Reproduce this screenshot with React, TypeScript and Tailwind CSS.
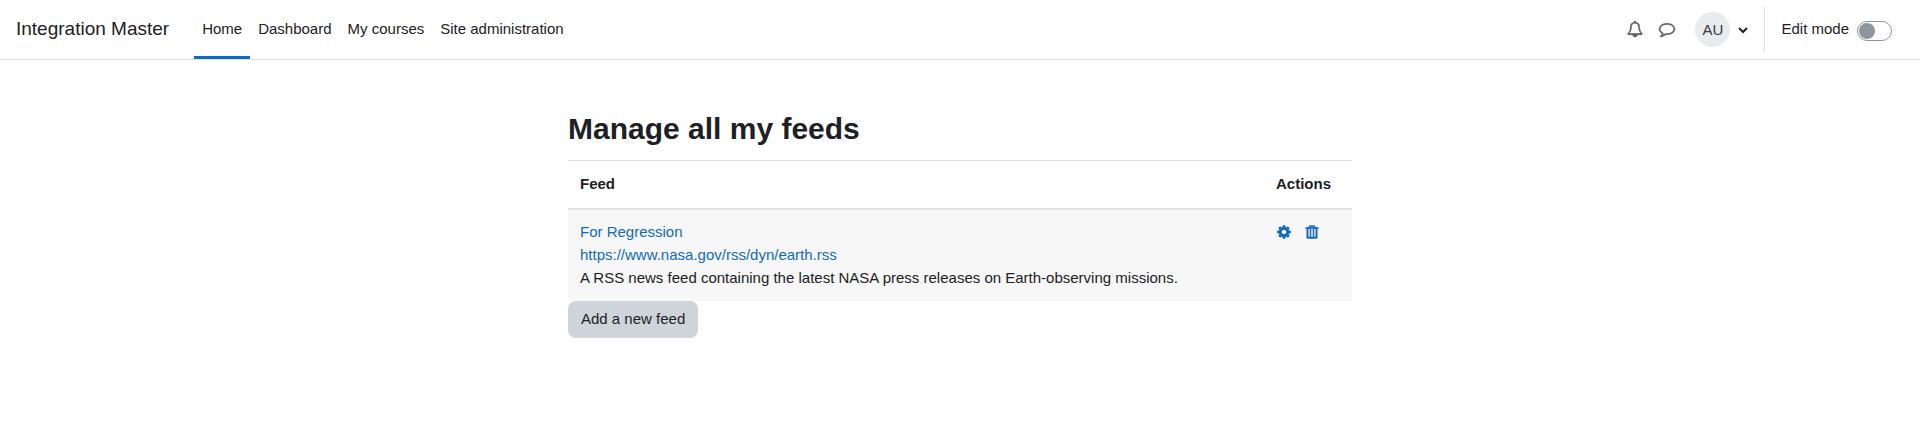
import { useState } from "react";

const ICONS = {
  bell: "M912 1696q0-16-16-16-59 0-101.5-42.5t-42.5-101.5q0-16-16-16t-16 16q0 73 51.5 124.5t124.5 51.5q16 0 16-16zm-666-288h1300q-266-300-266-832 0-51-24-105t-69-103-121.5-80.5-169.5-31.5-169.5 31.5-121.5 80.5-69 103-24 105q0 532-266 832zm1482 0q0 52-38 90t-90 38h-448q0 106-75 181t-181 75-181-75-75-181h-448q-52 0-90-38t-38-90q50-42 91-88t85-119.5 74.5-158.5 50-206 19.5-260q0-152 117-282.5t307-158.5q-8-19-8-39 0-40 28-68t68-28 68 28 28 68q0 20-8 39 190 28 307 158.5t117 282.5q0 139 19.5 260t50 206 74.5 158.5 85 119.5 91 88z",
  comment:
    "M896 384q-204 0-381.5 69.5t-282 187.5-104.5 255q0 112 71.5 213.5t201.5 175.5l87 50-27 96q-24 91-70 172 152-63 275-171l43-38 57 6q69 8 130 8 204 0 381.5-69.5t282-187.5 104.5-255-104.5-255-282-187.5-381.5-69.5zm896 512q0 174-120 321.5t-326 233-450 85.5q-70 0-145-8-198 175-460 242-49 14-114 22h-5q-15 0-27-10.5t-16-27.5v-1q-3-4-.5-12t2-10 4.5-9.5l6-9 7-8.5 8-9q7-8 31-34.5t34.5-38 31-39.5 32.5-51 27-59 26-76q-157-89-247.5-220t-90.5-281q0-174 120-321.5t326-233 450-85.5 450 85.5 326 233 120 321.5z",
  cog: "M1152 896q0-106-75-181t-181-75-181 75-75 181 75 181 181 75 181-75 75-181zm512-109v222q0 12-8 23t-20 13l-185 28q-19 54-39 91 35 50 107 138 10 12 10 25t-9 23q-27 37-99 108t-94 71q-12 0-26-9l-138-108q-44 23-91 38-16 136-29 186-7 28-36 28h-222q-14 0-24.5-8.5t-11.5-21.5l-28-184q-49-16-90-37l-141 107q-10 9-25 9-14 0-25-11-126-114-165-168-7-10-7-23 0-12 8-23 15-21 51-66.5t54-70.5q-27-50-41-99l-183-27q-13-2-21-12.5t-8-23.5v-222q0-12 8-23t19-13l186-28q14-46 39-92-40-57-107-138-10-12-10-24 0-10 9-23 26-36 98.5-107.5t94.5-71.5q13 0 26 10l138 107q44-23 91-38 16-136 29-186 7-28 36-28h222q14 0 24.5 8.5t11.5 21.5l28 184q49 16 90 37l142-107q9-9 24-9 13 0 25 10 129 119 165 170 7 8 7 22 0 12-8 23-15 21-51 66.5t-54 70.5q26 50 41 98l183 28q13 2 21 12.5t8 23.5z",
};

function Icon({ name, weight = 0 }: { name: keyof typeof ICONS; weight?: number }) {
  return (
    <svg
      viewBox="0 0 1792 1792"
      className="size-4 overflow-visible fill-current stroke-current"
      strokeWidth={weight}
      aria-hidden="true"
    >
      <path d={ICONS[name]} />
    </svg>
  );
}

function TrashIcon() {
  return (
    <svg viewBox="0 0 16 16" className="size-4" fill="none" stroke="currentColor" aria-hidden="true">
      <path d="M5 3.5 6 2h4l1 1.5" strokeWidth="1.4" />
      <path d="M1.5 4h13" strokeWidth="1.8" />
      <path d="M3.5 4.5v9.3h9V4.5" strokeWidth="2" strokeLinejoin="round" />
      <path d="M6.5 5v8M9.5 5v8" strokeWidth="1.5" />
    </svg>
  );
}

const navItems = ["Home", "Dashboard", "My courses", "Site administration"];

const feeds = [
  {
    title: "For Regression",
    url: "https://www.nasa.gov/rss/dyn/earth.rss",
    description:
      "A RSS news feed containing the latest NASA press releases on Earth-observing missions.",
  },
];

function Navbar() {
  const [editing, setEditing] = useState(false);

  return (
    <header className="flex h-[60px] items-stretch border-b border-[#dee2e6] pr-7 pl-4">
      <a href="#" className="mr-[25px] flex items-center pb-0.5 text-[19px]">
        Integration Master
      </a>
      <nav className="flex">
        {navItems.map((item, i) => (
          <a
            key={item}
            href="#"
            aria-current={i === 0 ? "page" : undefined}
            className="flex items-center border-b-3 border-transparent px-2 pt-px aria-[current=page]:border-[#0f6cbf]"
          >
            {item}
          </a>
        ))}
      </nav>

      <div className="ml-auto flex items-center">
        <div className="flex gap-4 pb-0.5 text-[#5a5f64]">
          <button type="button" aria-label="Notifications">
            <Icon name="bell" weight={70} />
          </button>
          <button type="button" aria-label="Messages">
            <Icon name="comment" weight={60} />
          </button>
        </div>
        <button type="button" aria-label="User menu" className="ml-5 flex items-center gap-2">
          <span className="flex size-[35px] items-center justify-center rounded-full bg-[#e9ecef] pb-px text-[#343a40]">
            AU
          </span>
          <svg viewBox="0 0 10 8" className="h-2 w-2.5" aria-hidden="true">
            <path d="M1 2 5 6 9 2" fill="none" stroke="currentColor" strokeWidth="2" />
          </svg>
        </button>
        <div className="ml-4 h-[45px] border-l border-[#dee2e6]" />
        <label htmlFor="edit-mode" className="ml-4 pb-0.5">
          Edit mode
        </label>
        <input
          id="edit-mode"
          type="checkbox"
          role="switch"
          checked={editing}
          onChange={(e) => setEditing(e.target.checked)}
          className="mt-0.5 ml-2 flex h-5 w-[35px] appearance-none items-center rounded-full border border-[#8f959e] px-px before:size-4 before:rounded-full before:bg-[#8f959e] checked:justify-end checked:bg-[#0f6cbf] checked:before:bg-white"
        />
      </div>
    </header>
  );
}

export default function App() {
  return (
    <div className="bg-white font-['Liberation_Sans',Arial,sans-serif] text-[15px] leading-[23px] text-[#1d2125]">
      <Navbar />
      <main className="mx-auto max-w-[784px] py-[51px]">
        <h1 className="mb-[13px] text-3xl leading-9 font-bold">Manage all my feeds</h1>

        <table className="w-full border-collapse text-left">
          <thead>
            <tr className="border-t border-b-2 border-[#dee2e6]">
              <th className="px-3 pt-[11px] pb-[13px]">Feed</th>
              <th className="w-[88px] px-3 pt-[11px] pb-[13px]">Actions</th>
            </tr>
          </thead>
          <tbody>
            {feeds.map((feed) => (
              <tr key={feed.url} className="bg-[#f7f7f7] align-top">
                <td className="px-3 pt-2.5 pb-3">
                  <a href="#" className="block text-[#0f6cbf]">
                    {feed.title}
                  </a>
                  <a href={feed.url} className="block text-[#0f6cbf]">
                    {feed.url}
                  </a>
                  <p>{feed.description}</p>
                </td>
                <td className="px-3 pt-2.5 pb-3">
                  <div className="flex h-[23px] items-center gap-3 text-[#0f6cbf]">
                    <a href="#" aria-label="Edit">
                      <Icon name="cog" />
                    </a>
                    <a href="#" aria-label="Delete">
                      <TrashIcon />
                    </a>
                  </div>
                </td>
              </tr>
            ))}
          </tbody>
        </table>

        <button type="button" className="rounded-lg bg-[#ced4da] px-[13px] pt-1.5 pb-2">
          Add a new feed
        </button>
      </main>
    </div>
  );
}
